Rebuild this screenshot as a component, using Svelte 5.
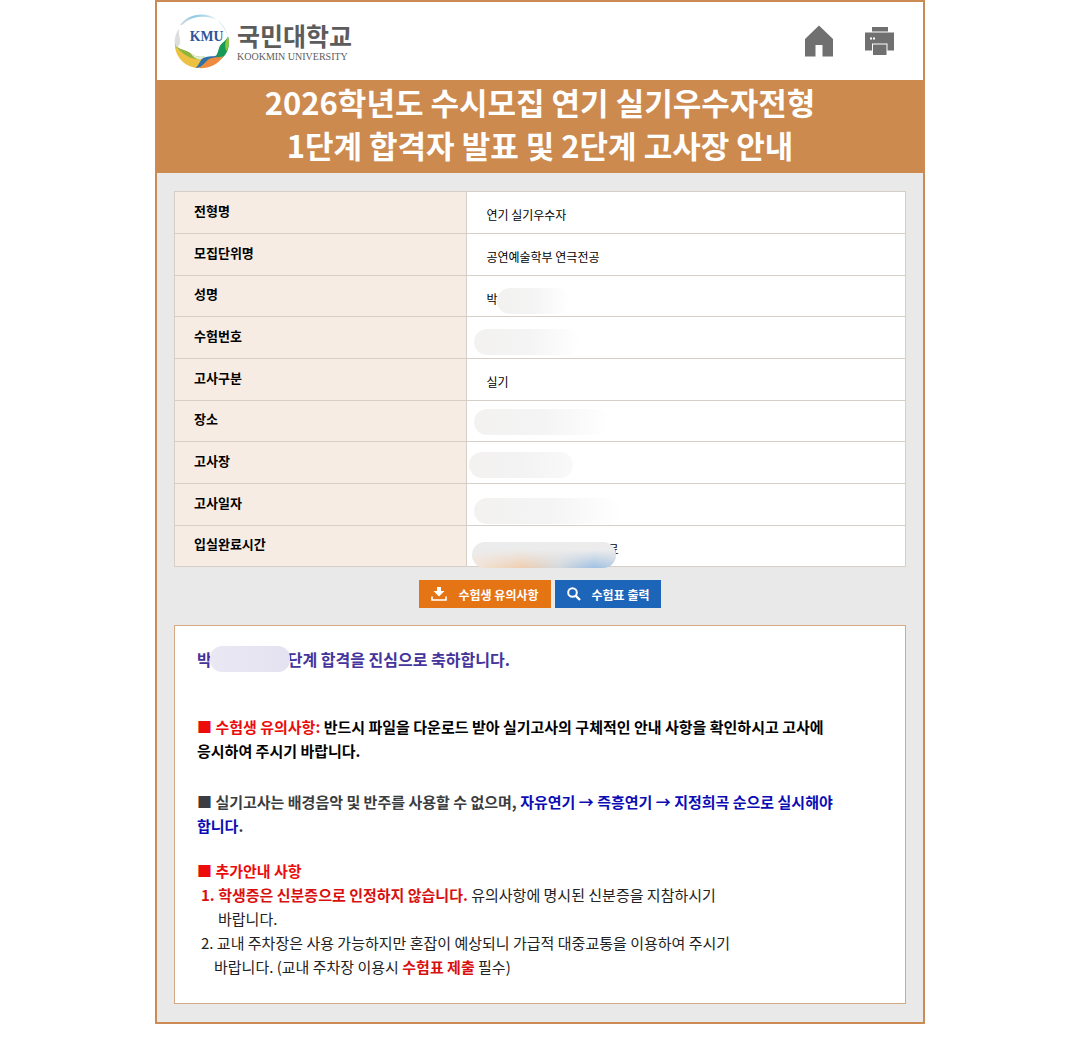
<script lang="ts">
	type Row = { label: string; value: string; smudge?: string };

	const rows: Row[] = [
		{ label: '전형명', value: '연기 실기우수자' },
		{ label: '모집단위명', value: '공연예술학부 연극전공' },
		{ label: '성명', value: '박', smudge: 'name' },
		{ label: '수험번호', value: '', smudge: 'number' },
		{ label: '고사구분', value: '실기' },
		{ label: '장소', value: '', smudge: 'place' },
		{ label: '고사장', value: '', smudge: 'room' },
		{ label: '고사일자', value: '', smudge: 'date' },
		{ label: '입실완료시간', value: '', smudge: 'time' }
	];

	function printPage() {
		window.print();
	}
</script>

<main class="page">
	<header class="header">
		<a class="logo" href="#home" aria-label="국민대학교 KOOKMIN UNIVERSITY">
			<svg class="emblem" viewBox="0 0 56 56" aria-hidden="true">
				<defs>
					<linearGradient id="sky" x1="0" y1="0" x2="1" y2="0">
						<stop offset="0" stop-color="#d8dde0" />
						<stop offset="0.4" stop-color="#8cc9e2" />
						<stop offset="1" stop-color="#e4f1f7" />
					</linearGradient>
				</defs>
				<path d="M6 11C15-1 33-3 44 6C32 1 20 2 12 8C9 11 8 12 6 11Z" fill="url(#sky)" />
				<path d="M44 6C50 10 54 17 55 23C52 15 48 10 44 6Z" fill="#d3e8f0" />
				<path d="M5 15C0 22 0 30 2 36C5 34 7 29 6 25C5 21 5 18 5 15Z" fill="#dcdedd" />
				<path d="M1 29C0 43 11 54 24 55C29 52 30 48 31 44C22 46 16 41 11 39C6 38 2 35 1 29Z" fill="#ecc142" />
				<path d="M1 32C5 36 12 36 17 40C22 44 27 44 31 43C30 46 25 47 19 45C12 43 6 38 1 32Z" fill="#8eb43d" />
				<path d="M17 40C22 44 27 44 32 43L29 46C24 47 20 45 17 40Z" fill="#e3ecd0" />
				<path d="M55 23C58 34 53 43 46 47L42 44C44 41 45 38 46 34C48 29 53 28 55 23Z" fill="#169a55" />
				<path d="M55 23C57 29 56 34 53 38C52 33 51 30 55 23Z" fill="#8cc63f" />
				<path d="M28 46C33 42 38 44 45 42C43 46 38 45 33 49C29 53 26 55 22 55C25 52 26 49 28 46Z" fill="#2e72a8" />
				<path d="M24 55C34 56 45 52 50 43C44 45 38 43 33 48C30 51 28 54 24 55Z" fill="#ee8b3e" />
				<text x="16" y="27" class="kmu">KMU</text>
			</svg>
			<span class="names">
				<strong>국민대학교</strong>
				<small>KOOKMIN UNIVERSITY</small>
			</span>
		</a>
		<nav class="tools">
			<a href="#home" aria-label="홈">
				<svg width="28" height="32" viewBox="0 0 28 32" aria-hidden="true">
					<path d="M14 0.5L28 14V31.5H17.5V20H10.5V31.5H0V14Z" fill="#707070" />
				</svg>
			</a>
			<button type="button" aria-label="인쇄" onclick={printPage}>
				<svg width="30" height="28" viewBox="0 0 30 28" aria-hidden="true">
					<path d="M7 0H23V4.500H7ZM0 5.500H29V23.500H22.500V16.500H7V23.500H0Z" fill="#707070" />
					<path d="M8 17.500H21.500V28H8Z" fill="#707070" />
					<path d="M5 10.500H7V12.500H5ZM8 10.500H10V12.500H8Z" fill="#fff" />
				</svg>
			</button>
		</nav>
	</header>

	<h1>
		2026학년도 수시모집 연기 실기우수자전형<br />
		1단계 합격자 발표 및 2단계 고사장 안내
	</h1>

	<div class="content">
		<table>
			<tbody>
				{#each rows as row}
					<tr>
						<th scope="row">{row.label}</th>
						<td>
							{row.value}
							{#if row.smudge === 'time'}<span class="rest">료</span>{/if}
							{#if row.smudge}<span class="smudge {row.smudge}"></span>{/if}
						</td>
					</tr>
				{/each}
			</tbody>
		</table>

		<div class="buttons">
			<button type="button" class="notice-btn">
				<svg width="16" height="14" viewBox="0 0 16 14" aria-hidden="true">
					<path d="M6 0H10V4H13.500L8 9.500L2.500 4H6Z" fill="#fff" />
					<path d="M1 9.500V13H15V9.500" fill="none" stroke="#fff" stroke-width="1.600" />
				</svg>
				수험생 유의사항
			</button>
			<button type="button" class="print-btn" onclick={printPage}>
				<svg width="14" height="14" viewBox="0 0 14 14" aria-hidden="true">
					<circle cx="5.500" cy="5.500" r="4.300" fill="none" stroke="#fff" stroke-width="2" />
					<path d="M8.800 8.800L13 13" stroke="#fff" stroke-width="2.400" />
				</svg>
				수험표 출력
			</button>
		</div>

		<section class="notice">
			<p class="congrats">박<span class="cover"></span>단계 합격을 진심으로 축하합니다.</p>

			<p class="guide">
				<span class="red">■ 수험생 유의사항:</span> 반드시 파일을 다운로드 받아 실기고사의 구체적인 안내 사항을 확인하시고 고사에<br />
				응시하여 주시기 바랍니다.
			</p>

			<p class="music">
				■ 실기고사는 배경음악 및 반주를 사용할 수 없으며, <span class="blue">자유연기 → 즉흥연기 → 지정희곡 순으로 실시해야<br />
				합니다</span>.
			</p>

			<h2>■ 추가안내 사항</h2>
			<ul>
				<li>
					<b>1. 학생증은 신분증으로 인정하지 않습니다.</b> 유의사항에 명시된 신분증을 지참하시기<br />
					바랍니다.
				</li>
				<li>
					2. 교내 주차장은 사용 가능하지만 혼잡이 예상되니 가급적 대중교통을 이용하여 주시기<br />
					바랍니다. (교내 주차장 이용시 <b>수험표 제출</b> 필수)
				</li>
			</ul>
		</section>
	</div>
</main>

<style>
	:global(body) {
		background: #fff;
		font-family: 'Noto Sans CJK KR', 'Noto Sans', sans-serif;
	}

	.page {
		box-sizing: border-box;
		max-width: 770px;
		margin: 0 auto;
		border: 2px solid #cc8a54;
		background: #e9e9e9;
		color: #000;
	}

	.header {
		box-sizing: border-box;
		display: flex;
		justify-content: space-between;
		align-items: center;
		height: 78px;
		padding: 0 28px 0 17px;
		background: #fff;
	}

	.logo {
		display: flex;
		align-items: center;
		gap: 8px;
		color: #5c5c5c;
		text-decoration: none;
	}

	.emblem {
		width: 55px;
		height: 55px;
	}

	.kmu {
		font: bold 14px 'Liberation Serif', serif;
		fill: #2f5597;
	}

	.names {
		display: flex;
		flex-direction: column;
		gap: 2px;
		padding-top: 2px;
	}

	.names strong {
		font-size: 25px;
		line-height: 28px;
	}

	.names small {
		font: 10px/12px 'Liberation Serif', serif;
	}

	.tools {
		display: flex;
		align-items: center;
		gap: 32px;
	}

	.tools a,
	.tools button {
		display: flex;
		padding: 0;
		border: none;
		background: none;
		cursor: pointer;
	}

	h1 {
		margin: 0;
		padding: 0 0 7px;
		background: #cc8a4f;
		color: #fff;
		font-size: 31px;
		font-weight: bold;
		line-height: 43px;
		text-align: center;
	}

	.content {
		padding: 18px 17px;
	}

	table {
		width: 100%;
		border-collapse: collapse;
		table-layout: fixed;
		background: #fff;
	}

	tr {
		height: 42px;
	}

	tr:nth-child(3n) {
		height: 41px;
	}

	th,
	td {
		box-sizing: border-box;
		border: 1px solid #d6cfc8;
		padding: 0 19px;
		line-height: 20px;
		text-align: left;
	}

	th {
		width: 40%;
		padding-bottom: 4px;
		background: #f6ece4;
		font-size: 13px;
	}

	td {
		position: relative;
		padding-top: 5px;
		font-size: 12px;
	}

	.smudge {
		position: absolute;
		top: 12px;
		left: 7px;
		height: 26px;
		border-radius: 13px;
		background: linear-gradient(90deg, #f3f2f1, #f4f4f4 50%, #fff);
	}

	.name {
		left: 30px;
		width: 72px;
	}

	.number {
		width: 106px;
	}

	.place {
		top: 8px;
		width: 136px;
	}

	.room {
		top: 10px;
		left: 2px;
		width: 104px;
		background: linear-gradient(90deg, #f4f2f1, #f3f3f3 50%, #f9f9f9);
	}

	.date {
		top: 14px;
		width: 148px;
	}

	.time {
		top: 16px;
		left: 5px;
		width: 144px;
		background:
			linear-gradient(#ececec 30%, rgba(236, 236, 236, 0)),
			linear-gradient(90deg, #f3e6da, #efcdb0 35%, #d5d8dc 60%, #9fc0e3 85%, #b9cde2);
	}

	.rest {
		padding-left: 121px;
	}

	.buttons {
		display: flex;
		justify-content: center;
		gap: 4px;
		margin: 13px 0 17px;
	}

	.buttons button {
		display: flex;
		align-items: center;
		height: 28px;
		padding: 0 12px;
		border: none;
		color: #fff;
		font-family: inherit;
		font-size: 12px;
		font-weight: bold;
		cursor: pointer;
	}

	.notice-btn {
		gap: 12px;
		background: #e47414;
	}

	.print-btn {
		gap: 11px;
		background: #1c65b8;
	}

	.notice {
		padding: 21px 22px 24px;
		border: 1px solid #d3aa85;
		background: #fff;
		font-size: 15px;
		line-height: 24px;
		color: #222;
	}

	.notice p {
		margin: 0;
		font-weight: bold;
	}

	.notice .congrats {
		font-size: 16px;
		color: #44349c;
	}

	.cover {
		position: relative;
		display: inline-block;
		width: 80px;
		height: 26px;
		margin: -1px -2px;
		border-radius: 12px;
		background: linear-gradient(90deg, #e9e8f3, #e4e2f0);
		vertical-align: top;
	}

	.notice .guide {
		margin-top: 44px;
		color: #000;
	}

	.notice .music {
		margin-top: 27px;
		color: #3b3d40;
	}

	.red {
		color: #ec0c0c;
	}

	.blue {
		color: #0c0cb4;
	}

	h2 {
		margin: 21px 0 0;
		color: #ec0c0c;
		font-size: 15px;
		line-height: 24px;
	}

	ul {
		margin: 0;
		padding: 0;
		list-style: none;
	}

	li {
		padding-left: 21px;
		text-indent: -17px;
	}

	li:last-child {
		padding-left: 17px;
		text-indent: -13px;
	}

	li b {
		color: #d81010;
	}
</style>
